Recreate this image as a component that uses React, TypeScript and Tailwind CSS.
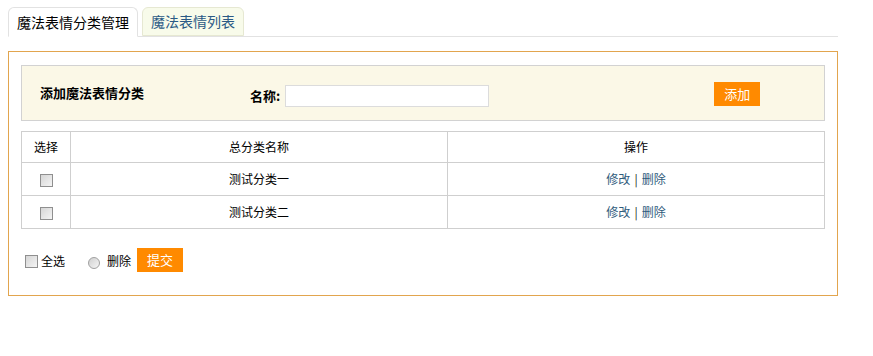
import React from "react";

const font = { fontFamily: '"Noto Sans CJK SC", "Noto Sans", sans-serif' };

function Box() {
  return (
    <span className="inline-block w-[13px] h-[13px] border border-[#8f8f8f] bg-gradient-to-br from-[#d6d6d6] to-[#f4f4f4] align-middle" />
  );
}

function Radio() {
  return (
    <span className="inline-block w-[12px] h-[12px] rounded-full border border-[#a0a0a0] bg-gradient-to-br from-[#d0d0d0] to-[#f6f6f6] align-middle" />
  );
}

const rows = ["测试分类一", "测试分类二"];

export default function App() {
  return (
    <div className="bg-white w-[873px] h-[356px] pt-[7px] pl-[8px] text-[12px] text-[#222]" style={font}>
      <div className="flex items-end gap-[4px] w-[830px] h-[30px] border-b border-[#e2e2e2]">
        <div className="w-[130px] h-[30px] mb-[-1px] flex items-center justify-center bg-white border border-[#e2e2e2] border-b-white rounded-t-[6px] text-[14px] text-black">
          魔法表情分类管理
        </div>
        <div className="w-[102px] h-[29px] flex items-center justify-center bg-[#f8fbea] border border-[#e6e8d2] rounded-t-[6px] text-[14px] text-[#2b5a85]">
          魔法表情列表
        </div>
      </div>

      <div className="mt-[14px] w-[830px] h-[245px] border border-[#e2a54e] pt-[13px] pl-[12px]">
        <div className="w-[804px] h-[56px] bg-[#fbf8e7] border border-[#d2d2d2] flex items-center pl-[18px]">
          <div className="w-[210px] text-[13px] font-bold text-black">添加魔法表情分类</div>
          <div className="flex items-center mt-[6px]">
            <span className="text-[13px] font-bold text-black">名称:</span>
            <input className="ml-[5px] w-[204px] h-[22px] bg-white border border-[#dcdcdc] outline-none" />
          </div>
          <button className="ml-[225px] w-[46px] h-[24px] bg-[#ff8a00] text-white text-[13px] mt-[1px]">添加</button>
        </div>

        <table className="mt-[10px] w-[804px] border-collapse text-center">
          <thead>
            <tr className="h-[31px]">
              <th className="w-[49px] border border-[#cfcfcf] font-normal text-black">选择</th>
              <th className="w-[377px] border border-[#cfcfcf] font-normal text-black">总分类名称</th>
              <th className="border border-[#cfcfcf] font-normal text-black">操作</th>
            </tr>
          </thead>
          <tbody>
            {rows.map((r) => (
              <tr key={r} className="h-[33px]">
                <td className="border border-[#cfcfcf]">
                  <Box />
                </td>
                <td className="border border-[#cfcfcf] text-black">{r}</td>
                <td className="border border-[#cfcfcf]">
                  <span className="text-[#2f5b7c]">修改</span>
                  <span className="mx-[4px] text-[#222]">|</span>
                  <span className="text-[#2f5b7c]">删除</span>
                </td>
              </tr>
            ))}
          </tbody>
        </table>

        <div className="mt-[20px] flex items-center h-[24px] pl-[4px]">
          <Box />
          <span className="ml-[3px] text-black">全选</span>
          <span className="ml-[23px]">
            <Radio />
          </span>
          <span className="ml-[7px] text-black">删除</span>
          <button className="ml-[6px] w-[46px] h-[24px] bg-[#ff8a00] text-white text-[13px] mb-[3px]">提交</button>
        </div>
      </div>
    </div>
  );
}
